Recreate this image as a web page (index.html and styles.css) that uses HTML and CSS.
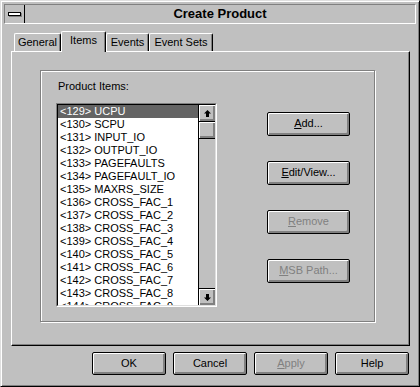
FILE: index.html
```html
<!DOCTYPE html>
<html lang="en">
<head>
    <meta charset="UTF-8">
    <title>Create Product</title>
    <link rel="stylesheet" href="styles.css">
</head>
<body>

<div class="window">
    <div class="titlebar">
        <div class="sysmenu"><span class="dash"></span></div>
        <div class="title">Create Product</div>
    </div>

    <div class="content">
        <div class="tabs">
            <div class="tab tab-general">General</div>
            <div class="tab tab-items active">Items</div>
            <div class="tab tab-events">Events</div>
            <div class="tab tab-sets">Event Sets</div>
        </div>

        <div class="panel">
            <div class="group">
                <div class="group-label">Product Items:</div>
                <div class="group-row">
                    <div class="listbox">
                        <div class="listbox-inner">
                            <ul class="items">
                                <li class="selected">&lt;129&gt; UCPU</li>
                                <li>&lt;130&gt; SCPU</li>
                                <li>&lt;131&gt; INPUT_IO</li>
                                <li>&lt;132&gt; OUTPUT_IO</li>
                                <li>&lt;133&gt; PAGEFAULTS</li>
                                <li>&lt;134&gt; PAGEFAULT_IO</li>
                                <li>&lt;135&gt; MAXRS_SIZE</li>
                                <li>&lt;136&gt; CROSS_FAC_1</li>
                                <li>&lt;137&gt; CROSS_FAC_2</li>
                                <li>&lt;138&gt; CROSS_FAC_3</li>
                                <li>&lt;139&gt; CROSS_FAC_4</li>
                                <li>&lt;140&gt; CROSS_FAC_5</li>
                                <li>&lt;141&gt; CROSS_FAC_6</li>
                                <li>&lt;142&gt; CROSS_FAC_7</li>
                                <li>&lt;143&gt; CROSS_FAC_8</li>
                                <li>&lt;144&gt; CROSS_FAC_9</li>
                            </ul>
                            <div class="scrollbar">
                                <div class="sb-btn sb-up">
                                    <svg width="7" height="7" viewBox="0 0 7 7"><path d="M3.5 0 L7 3.5 L5 3.5 L5 7 L2 7 L2 3.5 L0 3.5 Z" fill="#000"/></svg>
                                </div>
                                <div class="sb-thumb"></div>
                                <div class="sb-track"></div>
                                <div class="sb-btn sb-down">
                                    <svg width="7" height="7" viewBox="0 0 7 7"><path d="M3.5 7 L7 3.5 L5 3.5 L5 0 L2 0 L2 3.5 L0 3.5 Z" fill="#000"/></svg>
                                </div>
                            </div>
                        </div>
                    </div>

                    <div class="side-buttons">
                        <div class="btn"><u>A</u>dd...</div>
                        <div class="btn"><u>E</u>dit/View...</div>
                        <div class="btn disabled"><u>R</u>emove</div>
                        <div class="btn disabled"><u>M</u>SB Path...</div>
                    </div>
                </div>
            </div>
        </div>

        <div class="dialog-buttons">
            <div class="btn btn-wide">OK</div>
            <div class="btn btn-wide">Cancel</div>
            <div class="btn btn-wide disabled"><u>A</u>pply</div>
            <div class="btn btn-wide">Help</div>
        </div>
    </div>
</div>

</body>
</html>
```

FILE: styles.css
```css
* {
    box-sizing: border-box;
}

body {
    margin: 0;
    padding: 0;
    background-color: #c0c0c0;
    font-family: "Liberation Sans", Arial, sans-serif;
    font-size: 11px;
    color: #000;
}

.window {
    width: 420px;
    height: 387px;
    background-color: #c0c0c0;
    border: 1px solid;
    border-color: #dfdfdf #000 #000 #dfdfdf;
    box-shadow: inset 1px 1px #fff, inset -1px -1px #808080;
    padding: 3px;
}

/* title bar */
.titlebar {
    display: flex;
    height: 20px;
    border: 1px solid;
    border-color: #808080 #fff #fff #808080;
}

.sysmenu {
    width: 20px;
    border-right: 1px solid #000;
    display: flex;
    align-items: center;
    justify-content: center;
}

.dash {
    display: block;
    width: 13px;
    height: 4px;
    background-color: #fff;
    border: 1px solid #000;
    box-shadow: 1px 1px #808080;
}

.title {
    flex: 1;
    text-align: center;
    font-weight: bold;
    font-size: 13px;
    line-height: 18px;
}

/* body */
.content {
    padding: 7px 6px 0 7px;
}

.tabs {
    display: flex;
    align-items: flex-end;
    height: 20px;
    padding-left: 3px;
}

.tab {
    height: 18px;
    border-top: 1px solid #fff;
    border-left: 1px solid #fff;
    border-right: 1px solid #000;
    border-radius: 2px 2px 0 0;
    box-shadow: inset -1px 0 #808080;
    text-align: center;
    line-height: 16px;
    background-color: #c0c0c0;
}

.tab.active {
    height: 21px;
    margin-bottom: -1px;
    position: relative;
    z-index: 1;
    line-height: 16px;
}

.tab-general { width: 47px; }
.tab-items { width: 45px; }
.tab-events { width: 43px; }
.tab-sets { width: 64px; }

.panel {
    height: 295px;
    border: 1px solid;
    border-color: #fff #000 #000 #fff;
    box-shadow: inset -1px -1px #808080;
    padding: 18px 0 0 28px;
}

.group {
    width: 335px;
    height: 252px;
    border: 1px solid #808080;
    box-shadow: inset 1px 1px #fff, 1px 1px #fff;
    padding: 9px 0 0 15px;
}

.group-label {
    height: 13px;
    line-height: 13px;
    padding-left: 2px;
    margin-bottom: 10px;
}

.group-row {
    display: flex;
    align-items: flex-start;
}

/* list box */
.listbox {
    width: 161px;
    height: 204px;
    border: 1px solid;
    border-color: #808080 #fff #fff #808080;
}

.listbox-inner {
    display: flex;
    height: 100%;
    border: 1px solid;
    border-color: #000 #dfdfdf #dfdfdf #000;
}

.items {
    flex: 1;
    list-style: none;
    margin: 0;
    padding: 0;
    background-color: #fff;
    overflow: hidden;
}

.items li {
    height: 13px;
    line-height: 13px;
    padding-left: 2px;
    white-space: nowrap;
}

.items li.selected {
    background-color: #646464;
    color: #fff;
}

.scrollbar {
    width: 17px;
    display: flex;
    flex-direction: column;
    border-left: 1px solid #000;
    background-color: #c0c0c0;
}

.sb-btn, .sb-thumb {
    height: 17px;
    display: flex;
    align-items: center;
    justify-content: center;
    box-shadow: inset 1px 1px #fff, inset -1px -1px #808080, inset -2px -2px #808080;
}

.sb-up {
    border-bottom: 1px solid #000;
}

.sb-thumb {
    border-bottom: 1px solid #000;
}

.sb-track {
    flex: 1;
}

.sb-down {
    border-top: 1px solid #000;
}

/* buttons */
.side-buttons {
    display: flex;
    flex-direction: column;
    gap: 25px;
    margin: 9px 0 0 50px;
}

.btn {
    width: 83px;
    height: 24px;
    border: 1px solid #000;
    border-radius: 2px;
    box-shadow: inset 1px 1px #fff, inset -1px -1px #808080, inset -2px -2px #808080;
    text-align: center;
    line-height: 21px;
    background-color: #c0c0c0;
}

.btn.disabled {
    color: #808080;
}

.dialog-buttons {
    display: flex;
    justify-content: flex-end;
    gap: 7px;
    margin: 6px 1px 0 0;
}

.btn-wide {
    width: 74px;
    height: 23px;
    line-height: 20px;
}
```
